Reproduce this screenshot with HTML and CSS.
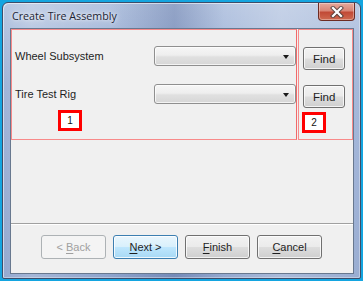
FILE: index.html
```html
<!DOCTYPE html>
<html>
<head>
<meta charset="utf-8">
<link rel="stylesheet" href="styles.css">
</head>
<body>
<div class="screen">
  <div class="window">
    <div class="titlebar">
      <span class="title">Create Tire Assembly</span>
      <button class="close" aria-label="Close">
        <svg width="16" height="12" viewBox="0 0 16 12">
          <path d="M4 2 L12 10 M12 2 L4 10" stroke="#3a3a3a" stroke-width="4.2" stroke-linecap="square" fill="none" opacity="0.75"/>
          <path d="M4 2 L12 10 M12 2 L4 10" stroke="#ffffff" stroke-width="2.2" stroke-linecap="square" fill="none"/>
        </svg>
      </button>
    </div>
    <div class="client">
      <div class="regions">
        <div class="region region-main">
          <div class="row">
            <span class="label">Wheel Subsystem</span>
            <div class="combo"><span class="arrow"></span></div>
          </div>
          <div class="row row2">
            <span class="label">Tire Test Rig</span>
            <div class="combo"><span class="arrow"></span></div>
          </div>
          <div class="tag tag1">1</div>
        </div>
        <div class="region region-side">
          <button class="btn find">Find</button>
          <button class="btn find find2">Find</button>
          <div class="tag tag2">2</div>
        </div>
      </div>
      <div class="spacer"></div>
      <div class="separator"></div>
      <div class="buttons">
        <button class="btn wide disabled"><span>&lt; <u>B</u>ack</span></button>
        <button class="btn wide default"><span><u>N</u>ext &gt;</span></button>
        <button class="btn wide"><span><u>F</u>inish</span></button>
        <button class="btn wide"><span><u>C</u>ancel</span></button>
      </div>
    </div>
  </div>
</div>
</body>
</html>
```

FILE: styles.css
```css
* { box-sizing: border-box; }
html, body { margin: 0; padding: 0; }
body {
  width: 363px;
  height: 281px;
  overflow: hidden;
  font-family: "Liberation Sans", Arial, sans-serif;
  font-size: 11px;
  color: #1e1e1e;
}
.screen {
  width: 363px;
  height: 281px;
  background: #14a5e0;
  padding: 2px;
}
.window {
  width: 359px;
  height: 277px;
  border-radius: 6px 6px 2px 2px;
  border: 1px solid #3d4d6a;
  background:
    linear-gradient(90deg, rgba(255,255,255,0.05) 0%, rgba(255,255,255,0.2) 8%, rgba(0,0,0,0) 30%, rgba(30,50,110,0.22) 48%, rgba(255,255,255,0.05) 62%, rgba(255,255,255,0.25) 78%, rgba(255,255,255,0.1) 100%),
    linear-gradient(180deg, #b4c4e0 0%, #9bb0d6 30%, #8ea4cd 100%);
  padding: 0 6px 4px 7px;
  display: flex;
  flex-direction: column;
  box-shadow: inset 1px 1px 0 rgba(255,255,255,0.55), inset -1px -1px 0 rgba(255,255,255,0.35);
}
.titlebar {
  height: 25px;
  flex: none;
  display: flex;
  align-items: flex-start;
  justify-content: space-between;
}
.title {
  font-family: "Open Sans", "Noto Sans", sans-serif;
  font-size: 10.7px;
  color: #1c2434;
  padding: 6px 0 0 2px;
  text-shadow: 0 0 6px rgba(255,255,255,0.9), 0 0 3px rgba(255,255,255,0.8);
}
.close {
  width: 37px;
  height: 18px;
  margin: 0 -1px 0 0;
  padding: 0;
  border: 1px solid #6d2b22;
  border-top: none;
  border-radius: 0 0 4px 4px;
  background: linear-gradient(180deg, #e5a99c 0%, #d88676 45%, #c14a36 55%, #cf6a50 100%);
  display: flex;
  align-items: center;
  justify-content: center;
  box-shadow: inset 0 0 0 1px rgba(255,255,255,0.35);
}
.client {
  flex: 1;
  background: #f0f0f0;
  border: 1px solid #68788f;
  display: flex;
  flex-direction: column;
}
.regions {
  display: flex;
  height: 111px;
}
.region {
  border: 1px solid #f88a8a;
}
.region-main {
  width: 287px;
  padding: 16px 0 0 3px;
  border-right-color: #f06a6a;
}
.region-side {
  width: 55px;
  margin-left: 1px;
  padding: 17px 0 0 4px;
}
.row {
  display: flex;
  align-items: center;
  justify-content: space-between;
  height: 20px;
}
.row2 { margin-top: 18px; }
.label {
  font-size: 11px;
  color: #1e1e1e;
}
.combo {
  width: 142px;
  height: 20px;
  border: 1px solid #8f8f8f;
  border-radius: 3px;
  background: linear-gradient(180deg, #f6f6f6 0%, #eeeeee 45%, #e0e0e0 55%, #d6d6d6 100%);
  position: relative;
  box-shadow: inset 0 0 0 1px rgba(255,255,255,0.7);
}
.arrow {
  position: absolute;
  right: 6px;
  top: 8px;
  width: 0;
  height: 0;
  border-left: 3.5px solid transparent;
  border-right: 3.5px solid transparent;
  border-top: 4px solid #1a1a1a;
}
.btn {
  font-family: "Liberation Sans", Arial, sans-serif;
  font-size: 11px;
  color: #1e1e1e;
  border: 1px solid #707070;
  border-radius: 3px;
  background: linear-gradient(180deg, #f2f2f2 0%, #ebebeb 48%, #dddddd 52%, #cfcfcf 100%);
  box-shadow: inset 0 0 0 1px rgba(255,255,255,0.75);
  padding: 0;
  display: flex;
  align-items: center;
  justify-content: center;
}
.find {
  width: 42px;
  height: 23px;
  font-size: 11.5px;
}
.find2 { margin-top: 15px; }
.tag {
  width: 24px;
  height: 21px;
  border: 3px solid #ff0000;
  background: #ffffff;
  font-size: 10px;
  display: flex;
  align-items: center;
  justify-content: center;
  color: #111;
}
.tag1 { margin: 6px 0 0 43px; }
.tag2 { margin: 4px 0 0 -1px; }
.spacer { flex: 1; }
.separator {
  height: 2px;
  border-top: 1px solid #a0a0a0;
  border-bottom: 1px solid #ffffff;
}
.buttons {
  display: flex;
  gap: 7px;
  padding: 10px 0 0 30px;
  height: 48px;
}
.wide {
  width: 65px;
  height: 24px;
}
.disabled {
  color: #a0a0a0;
  border-color: #adb2b5;
  background: #f4f4f4;
  box-shadow: none;
}
.default {
  border-color: #3c7fb1;
  background: linear-gradient(180deg, #eaf6fd 0%, #d9f0fc 48%, #bee6fd 52%, #a7d9f5 100%);
  box-shadow: inset 0 0 0 1px rgba(255,255,255,0.8);
}
u { text-decoration: underline; text-underline-offset: 2px; }
```
